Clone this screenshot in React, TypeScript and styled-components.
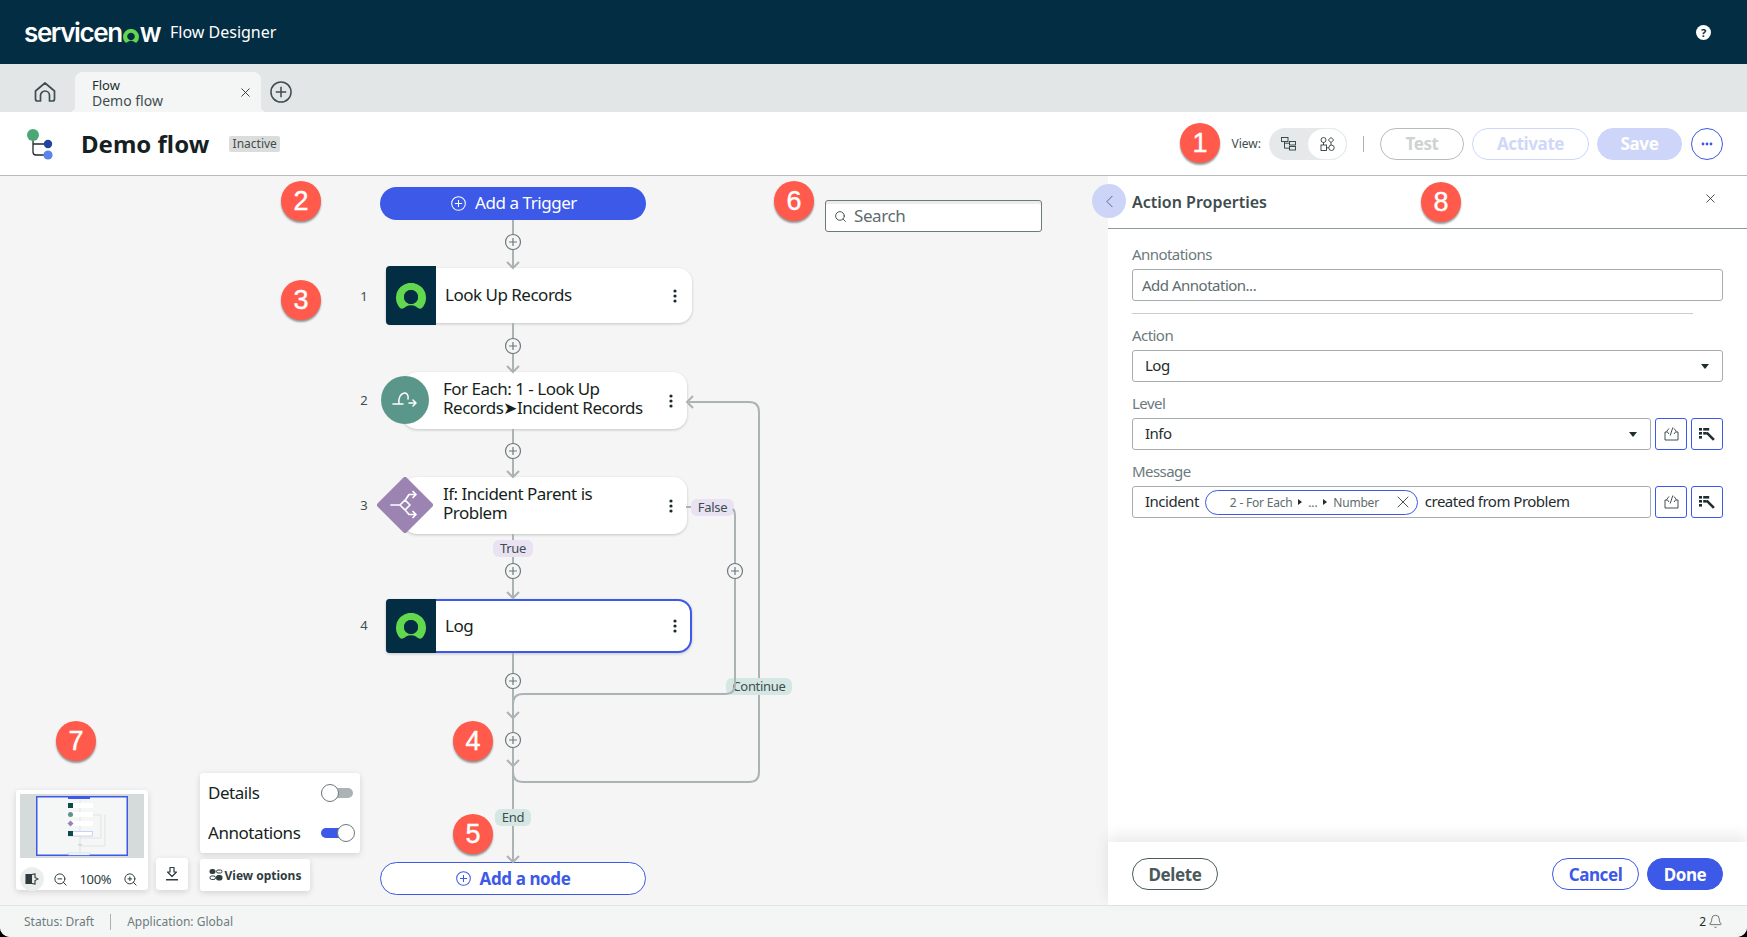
import React from "react";
import styled, { createGlobalStyle } from "styled-components";
import { Bell, ChevronLeft, Search, X, ZoomIn, ZoomOut } from "lucide-react";

const NowMark = ({ size, hole } : { size: number; hole?: string }) => (
    <svg width={size} height={size * 26 / 30} viewBox="0 0 30 26">
        <path
            fill="#62d84e"
            fillRule="evenodd"
            d="M4 25A15 15 0 1 1 26 25C24.5 26.5 22 25.5 20 23.5C17 21.7 13 21.7 10 23.5C8 25.5 5.5 26.5 4 25ZM15 7a7 7 0 1 0 .01 0Z"
        />
        {hole && <circle cx="15" cy="14" r="7" fill={hole} />}
    </svg>
);

const Kebab = () => (
    <svg width="4" height="14" viewBox="0 0 4 14" fill="#1c2a2e">
        <circle cx="2" cy="2" r="1.6" />
        <circle cx="2" cy="7" r="1.6" />
        <circle cx="2" cy="12" r="1.6" />
    </svg>
);

const PlusCircle = ({ size, color } : { size: number; color: string }) => (
    <svg width={size} height={size} viewBox="0 0 16 16" fill="none" stroke={color} strokeWidth="1.1">
        <circle cx="8" cy="8" r="7.3" />
        <path d="M8 4.2V11.8M4.2 8H11.8" />
    </svg>
);

const HomeIcon = () => (
    <svg width="22" height="22" viewBox="0 0 22 22" fill="none" stroke="#3f4d50" strokeWidth="1.7" strokeLinejoin="round">
        <path d="M1.5 10L11 2L20.5 10V18a2 2 0 0 1-2 2H15.5V14.5a4.5 4.5 0 0 0-9 0V20H3.5a2 2 0 0 1-2-2Z" />
    </svg>
);

const FlowIcon = () => (
    <svg width="32" height="34" viewBox="0 0 32 34" fill="none">
        <path d="M9 11V25a3 3 0 0 0 3 3H22M9 17H21" stroke="#1f2a30" strokeWidth="1.3" />
        <circle cx="9" cy="8" r="6" fill="#4aa874" />
        <circle cx="24" cy="17" r="4.2" fill="#23439e" />
        <circle cx="24" cy="28" r="4.6" fill="#5b85ea" />
    </svg>
);

const TreeIcon = () => (
    <svg width="15" height="14" viewBox="0 0 15 14" fill="none" stroke="#2e3c3e" strokeWidth="0.9">
        <rect x="0.5" y="0.5" width="6.5" height="4" />
        <rect x="8.5" y="4.5" width="6" height="3.5" />
        <rect x="8.5" y="9.5" width="6" height="3.5" />
        <path d="M3.5 4.5V11.2H8.5M3.5 6.2H8.5" />
    </svg>
);

const ShapesIcon = () => (
    <svg width="15" height="14" viewBox="0 0 15 14" fill="none" stroke="#2e3c3e" strokeWidth="0.9">
        <circle cx="3.5" cy="3" r="2.5" />
        <path d="M11 .5L13.7 3L11 5.5L8.3 3Z" />
        <rect x="1" y="8" width="5.5" height="5.5" />
        <circle cx="11.5" cy="10.8" r="2.7" />
        <path d="M3.5 5.5V8M11 5.5V8M6.5 10.8H8.8" />
    </svg>
);

const CodeIcon = () => (
    <svg width="15" height="14" viewBox="0 0 15 14" fill="none" stroke="#2e3c3e" strokeWidth="0.9">
        <path d="M3 5H1V13H14V5H12" />
        <path d="M5 1.5L2.8 4.2L5 7M10 1.5L12.2 4.2L10 7M8.8 .5L6.2 8.5" />
    </svg>
);

const PickerIcon = () => (
    <svg width="16" height="14" viewBox="0 0 16 14" fill="#1f2d30">
        <rect x="0" y="1" width="3" height="2.6" />
        <rect x="4.2" y="1" width="6" height="2.6" />
        <rect x="0" y="5" width="3" height="2.6" />
        <rect x="4.2" y="5" width="3.5" height="2.6" />
        <rect x="0" y="9" width="3" height="2.6" />
        <path d="M6.8 6.5L8.6 4.7L15.8 12L14 13.8Z" />
    </svg>
);

const LoopIcon = () => (
    <svg width="48" height="48" viewBox="-24 -24 48 48" fill="none" stroke="#fff" strokeWidth="1.5" strokeLinecap="round" strokeLinejoin="round">
        <path d="M-12 4H-2M-6 4C-8-9 5-10 3-1" />
        <path d="M4 3H11M8 0L11 3L8 6" />
    </svg>
);

const BranchIcon = () => (
    <svg width="56" height="56" viewBox="-28 -28 56 56" fill="none">
        <path d="M0-25.5L25.5 0L0 25.5L-25.5 0Z" fill="#9c84b2" stroke="#9c84b2" strokeWidth="5" strokeLinejoin="round" />
        <g stroke="#fff" strokeWidth="1.7" strokeLinecap="round" strokeLinejoin="round">
            <path d="M-14 0H-5L0-5L5 0L0 5L-5 0" />
            <path d="M1-6L4-10.5H11M8-13.5L11-10.5L8-7.5" />
            <path d="M1 6L4 9.5H11M8 6.5L11 9.5L8 12.5" />
        </g>
    </svg>
);

const MiniMapDrawing = () => (
    <svg width="124" height="64" viewBox="0 0 124 64">
        <rect width="124" height="64" fill="#d5dada" />
        <rect x="16.75" y="2.75" width="90.5" height="58.5" fill="#f5f6f6" stroke="#3c59e7" strokeWidth="1.5" />
        <g fill="none" stroke="#d5dbdb" strokeWidth="0.6">
            <path d="M60 5V59M60 44H81V21H73M60 52H85V21" />
        </g>
        <rect x="48" y="2" width="22" height="3" fill="#3c59e7" />
        <rect x="48" y="9" width="25" height="5" fill="#fff" />
        <rect x="48" y="9" width="5" height="5" fill="#0d4a4a" />
        <rect x="50" y="18" width="23" height="5" fill="#fff" />
        <circle cx="50.5" cy="20.5" r="2.5" fill="#5b968b" />
        <rect x="50" y="27" width="23" height="5" fill="#fff" />
        <path d="M50.5 26.5L53.5 29.5L50.5 32.5L47.5 29.5Z" fill="#9c84b2" />
        <rect x="48.5" y="37.5" width="24" height="4.5" fill="#fff" stroke="#a9b7f2" strokeWidth="0.6" />
        <rect x="48" y="37" width="5" height="5" fill="#0d4a4a" />
        <rect x="48.5" y="59" width="21" height="2" fill="#fff" stroke="#b9c5f5" strokeWidth="0.5" />
        <rect x="58" y="50" width="4" height="1.5" fill="#bfe0d6" />
    </svg>
);

const MapToggleIcon = () => (
    <svg width="14" height="12" viewBox="0 0 14 12" fill="none" stroke="#2e3c3e" strokeWidth="1.1">
        <path d="M1 1.5H6.5V10.5H1Z" fill="#2e3c3e" />
        <path d="M6.5 1.5L10 1V4.5L13 6L10 7.5V11L6.5 10.5" />
    </svg>
);

const ExportIcon = () => (
    <svg width="16" height="16" viewBox="0 0 16 16" fill="none" stroke="#2e3c3e" strokeWidth="1.2" strokeLinejoin="round">
        <path d="M6 1.5H10V6H12.5L8 10.5L3.5 6H6Z" />
        <path d="M2 13.8H14" strokeWidth="1.5" />
    </svg>
);

const OptionsIcon = () => (
    <svg width="14" height="14" viewBox="0 0 14 14" fill="none" stroke="#2e3c3e" strokeWidth="1">
        <rect x="1" y="1.5" width="5" height="4" rx="1.5" fill="#2e3c3e" />
        <rect x="7.5" y="2" width="5.5" height="3" rx="1.5" />
        <rect x="1" y="8" width="5.5" height="3.5" rx="1.7" />
        <rect x="7.5" y="7.5" width="5.5" height="4.5" rx="1.5" fill="#2e3c3e" />
    </svg>
);

const PLUS_LINE = "#6c7a7c";

const Arrow = ({ x, y } : { x: number; y: number }) => (
    <path d={`M${x - 6} ${y - 6}L${x} ${y}L${x + 6} ${y - 6}`} />
);

const AddStep = ({ x, y } : { x: number; y: number }) => (
    <g>
        <circle cx={x} cy={y} r="7.5" fill="#f5f5f5" stroke={PLUS_LINE} strokeWidth="1.2" />
        <path d={`M${x} ${y - 4}V${y + 4}M${x - 4} ${y}H${x + 4}`} stroke={PLUS_LINE} strokeWidth="1.2" />
    </g>
);

const Connectors = () => (
    <Wires viewBox="0 176 1108 729">
        <g fill="none" stroke="#acb3b4" strokeWidth="2">
            <path d="M513 220V267M513 323V371M513 429V476M513 534V540M513 557V597M513 653V717M513 718V765M513 766V809M513 826V861" />
            <path d="M735 516V684Q735 694 725 694H523Q513 694 513 704" />
            <path d="M689 402H749Q759 402 759 412V678M759 695V772Q759 782 749 782H523Q513 782 513 772" />
            <path d="M686 507H691M733 509Q735 511 735 516" />
            <Arrow x={513} y={268} />
            <Arrow x={513} y={372} />
            <Arrow x={513} y={477} />
            <Arrow x={513} y={598} />
            <Arrow x={513} y={718} />
            <Arrow x={513} y={766} />
            <Arrow x={513} y={862} />
            <path d="M693 396L687 402L693 408" />
        </g>
        <AddStep x={513} y={242} />
        <AddStep x={513} y={346} />
        <AddStep x={513} y={451} />
        <AddStep x={513} y={571} />
        <AddStep x={735} y={571} />
        <AddStep x={513} y={681} />
        <AddStep x={513} y={740} />
    </Wires>
);

const App = () => {

    return (
        <Page>
            <GlobalStyle />

            <Header>
                <Logo>
                    servicen<LogoRing><NowMark size={16} /></LogoRing>w
                </Logo>
                <ProductName>Flow Designer</ProductName>
                <HelpDot>?</HelpDot>
            </Header>

            <TabStrip>
                <HomeTab><HomeIcon /></HomeTab>
                <Tab>
                    <TabTitle>
                        <small>Flow</small>
                        <span>Demo flow</span>
                    </TabTitle>
                    <X size={15} strokeWidth={1.4} color="#1f2d30" />
                </Tab>
                <NewTab><PlusCircle size={22} color="#3f4d50" /></NewTab>
            </TabStrip>

            <TitleBar>
                <FlowIcon />
                <FlowName>Demo flow</FlowName>
                <StateTag>Inactive</StateTag>
                <Actions>
                    <ViewLabel>View:</ViewLabel>
                    <ViewSwitch>
                        <ViewOption><TreeIcon /></ViewOption>
                        <ViewOption $active><ShapesIcon /></ViewOption>
                    </ViewSwitch>
                    <Separator />
                    <PillButton $width={84} $kind="mutedGray">Test</PillButton>
                    <PillButton $width={117} $kind="mutedBlue">Activate</PillButton>
                    <PillButton $width={85} $kind="mutedFill">Save</PillButton>
                    <MoreButton>
                        <svg width="12" height="4" viewBox="0 0 12 4" fill="#3c59e7">
                            <circle cx="2" cy="2" r="1.4" />
                            <circle cx="6" cy="2" r="1.4" />
                            <circle cx="10" cy="2" r="1.4" />
                        </svg>
                    </MoreButton>
                </Actions>
            </TitleBar>

            <Main>
                <Canvas>
                    <TriggerButton $x={380} $y={11} $w={266} $h={33}>
                        <PlusCircle size={15} color="#fff" />
                        <ButtonLabel>Add a Trigger</ButtonLabel>
                    </TriggerButton>

                    <StepIndex $x={358} $y={120}>1</StepIndex>
                    <ActionCard $x={386} $y={92} $w={306} $h={55}>
                        <ActionIcon><NowMark size={30} hole="#032d42" /></ActionIcon>
                        <StepText>Look Up Records</StepText>
                        <Kebab />
                    </ActionCard>

                    <StepIndex $x={358} $y={224}>2</StepIndex>
                    <LogicCard $x={400} $y={196} $w={287} $h={57}>
                        <LogicIcon $left={-19} $top={4}><LoopIcon /></LogicIcon>
                        <LogicText>For Each: 1 - Look Up<br />Records➤Incident Records</LogicText>
                        <Kebab />
                    </LogicCard>

                    <StepIndex $x={358} $y={329}>3</StepIndex>
                    <LogicCard $x={400} $y={301} $w={287} $h={57}>
                        <BranchShape $left={-23} $top={0}><BranchIcon /></BranchShape>
                        <LogicText>If: Incident Parent is<br />Problem</LogicText>
                        <Kebab />
                    </LogicCard>

                    <StepIndex $x={358} $y={449}>4</StepIndex>
                    <SelectedCard $x={386} $y={423} $w={306} $h={54}>
                        <ActionIcon><NowMark size={30} hole="#032d42" /></ActionIcon>
                        <StepText>Log</StepText>
                        <Kebab />
                    </SelectedCard>

                    <FlowTag $x={493} $y={364} $w={40} $tone="#e8e2f2">True</FlowTag>
                    <FlowTag $x={691} $y={323} $w={43} $tone="#e8e2f2">False</FlowTag>
                    <FlowTag $x={726} $y={502} $w={66} $tone="#d5e7e3">Continue</FlowTag>
                    <FlowTag $x={495} $y={633} $w={36} $tone="#d5e7e3">End</FlowTag>

                    <NodeButton $x={380} $y={686} $w={266} $h={33}>
                        <PlusCircle size={15} color="#3c59e7" />
                        Add a node
                    </NodeButton>

                    <Connectors />

                    <SearchBox $x={825} $y={24} $w={217} $h={32}>
                        <Search size={13} color="#2e3c3e" strokeWidth={1.6} />
                        <ButtonLabel>Search</ButtonLabel>
                    </SearchBox>

                    <CanvasTools>
                        <MiniMap>
                            <MiniMapDrawing />
                            <MiniMapBar>
                                <ToolRound><MapToggleIcon /></ToolRound>
                                <ZoomOut size={15} color="#2e3c3e" strokeWidth={1.6} />
                                <ZoomLevel>100%</ZoomLevel>
                                <ZoomIn size={15} color="#2e3c3e" strokeWidth={1.6} />
                            </MiniMapBar>
                        </MiniMap>
                        <ExportButton><ExportIcon /></ExportButton>
                        <OptionsColumn>
                            <OptionsCard>
                                <OptionRow>
                                    <ButtonLabel>Details</ButtonLabel>
                                    <Toggle />
                                </OptionRow>
                                <OptionRow>
                                    <ButtonLabel>Annotations</ButtonLabel>
                                    <Toggle $on />
                                </OptionRow>
                            </OptionsCard>
                            <ViewOptions>
                                <OptionsIcon />
                                View options
                            </ViewOptions>
                        </OptionsColumn>
                    </CanvasTools>
                </Canvas>

                <Panel>
                    <BackButton><ChevronLeft size={21} strokeWidth={1} color="#4d5d60" /></BackButton>
                    <PanelHeader>
                        <PanelTitle>Action Properties</PanelTitle>
                        <PanelClose><X size={15} strokeWidth={1.3} color="#1f2d30" /></PanelClose>
                    </PanelHeader>

                    <PanelBody>
                        <Field>
                            <FieldLabel>Annotations</FieldLabel>
                            <TextBox $placeholder>Add Annotation...</TextBox>
                        </Field>
                        <FieldRule />
                        <Field>
                            <FieldLabel>Action</FieldLabel>
                            <TextBox>
                                Log
                                <SelectCaret />
                            </TextBox>
                        </Field>
                        <Field>
                            <FieldLabel>Level</FieldLabel>
                            <FieldRow>
                                <TextBox>
                                    Info
                                    <SelectCaret />
                                </TextBox>
                                <IconButton><CodeIcon /></IconButton>
                                <IconButton><PickerIcon /></IconButton>
                            </FieldRow>
                        </Field>
                        <Field>
                            <FieldLabel>Message</FieldLabel>
                            <FieldRow>
                                <TextBox>
                                    Incident
                                    <DataPill>
                                        <DataPath>
                                            2 - For Each <PathCaret /> ... <PathCaret /> Number
                                        </DataPath>
                                        <X size={20} strokeWidth={1} color="#1f2d30" />
                                    </DataPill>
                                    created from Problem
                                </TextBox>
                                <IconButton><CodeIcon /></IconButton>
                                <IconButton><PickerIcon /></IconButton>
                            </FieldRow>
                        </Field>
                    </PanelBody>

                    <PanelFooter>
                        <PillButton $width={86} $kind="outlineDark">Delete</PillButton>
                        <FooterRight>
                            <PillButton $width={87} $kind="outlineBlue">Cancel</PillButton>
                            <PillButton $width={76} $kind="fillBlue">Done</PillButton>
                        </FooterRight>
                    </PanelFooter>
                </Panel>
            </Main>

            <StatusBar>
                <StatusText>Status: Draft</StatusText>
                <StatusDivider />
                <StatusText>Application: Global</StatusText>
                <Notifications>
                    2
                    <Bell size={15} strokeWidth={1} color="#1f2d30" />
                </Notifications>
            </StatusBar>

            <Marker $x={1200} $y={143}>1</Marker>
            <Marker $x={301} $y={201}>2</Marker>
            <Marker $x={301} $y={300}>3</Marker>
            <Marker $x={473} $y={741}>4</Marker>
            <Marker $x={473} $y={834}>5</Marker>
            <Marker $x={794} $y={201}>6</Marker>
            <Marker $x={76} $y={741}>7</Marker>
            <Marker $x={1441} $y={202}>8</Marker>
        </Page>
    )
}

const GlobalStyle = createGlobalStyle`
    html, body {
        margin: 0;
        padding: 0;
        background: #000;
    }

    * {
        box-sizing: border-box;
    }
`;

const Page = styled.div`
    position: relative;
    display: flex;
    flex-direction: column;
    width: 1747px;
    height: 937px;
    overflow: hidden;
    border-radius: 0 0 10px 10px;
    background: #f5f5f5;
    font-family: "Noto Sans", sans-serif;
    color: #1f2d30;
`;

const Header = styled.header`
    display: flex;
    align-items: center;
    flex: none;
    height: 64px;
    padding: 0 36px 0 24px;
    background: #032d42;
    color: #fff;
`;

const Logo = styled.div`
    display: flex;
    align-items: baseline;
    flex: none;
    width: 135px;
    font-family: "Inter", sans-serif;
    font-size: 26px;
    font-weight: 600;
    letter-spacing: -1.4px;
`;

const LogoRing = styled.span`
    display: inline-flex;
    margin: 0 1px;
    transform: translateY(1px);
`;

const ProductName = styled.div`
    margin-left: 11px;
    font-size: 16px;
`;

const HelpDot = styled.div`
    display: flex;
    align-items: center;
    justify-content: center;
    width: 15px;
    height: 15px;
    margin-left: auto;
    border-radius: 50%;
    background: #fff;
    color: #032d42;
    font-size: 11px;
    font-weight: 700;
`;

const TabStrip = styled.nav`
    display: flex;
    align-items: flex-end;
    flex: none;
    height: 48px;
    padding-left: 34px;
    background: #e3e6e7;
`;

const HomeTab = styled.div`
    align-self: center;
    display: flex;
    width: 41px;
    margin-top: 8px;
`;

const Tab = styled.div`
    position: relative;
    display: flex;
    align-items: center;
    justify-content: space-between;
    width: 186px;
    height: 40px;
    padding: 0 8px 0 17px;
    border-radius: 8px 8px 0 0;
    background: #f4f6f6;

    &::before, &::after {
        content: "";
        position: absolute;
        bottom: 0;
        width: 6px;
        height: 6px;
        background: radial-gradient(circle at var(--side) 0, #e3e6e7 6px, #f4f6f6 6.5px);
    }

    &::before {
        --side: 0;
        left: -6px;
    }

    &::after {
        --side: 100%;
        right: -6px;
    }
`;

const TabTitle = styled.div`
    display: flex;
    flex-direction: column;
    padding-top: 1px;
    line-height: 15px;

    & small {
        font-size: 13px;
        color: #1f2d30;
    }

    & span {
        font-size: 14px;
        color: #3f4d50;
    }
`;

const NewTab = styled.div`
    align-self: center;
    display: flex;
    margin: 8px 0 0 9px;
`;

const TitleBar = styled.div`
    display: flex;
    align-items: center;
    flex: none;
    height: 64px;
    padding: 0 24px 0 24px;
    border-bottom: 1px solid #b5bbbb;
    background: #fff;
`;

const FlowName = styled.h1`
    margin: 0 0 0 25px;
    font-size: 24px;
    font-weight: 700;
    color: #161f22;
`;

const StateTag = styled.span`
    display: flex;
    align-items: center;
    justify-content: center;
    width: 51px;
    height: 16px;
    margin-left: 20px;
    border-radius: 2px;
    background: #dcdcdc;
    font-size: 12px;
    color: #3f4d50;
`;

const Actions = styled.div`
    display: flex;
    align-items: center;
    margin-left: auto;
    gap: 8px;
`;

const ViewLabel = styled.span`
    font-size: 12px;
    color: #3f4d50;
`;

const ViewSwitch = styled.div`
    display: flex;
    width: 78px;
    height: 32px;
    border-radius: 16px;
    background: #e6e9e9;
`;

const ViewOption = styled.div<{ $active?: boolean }>`
    display: flex;
    align-items: center;
    justify-content: center;
    width: ${props => props.$active ? "40px" : "38px"};
    border: ${props => props.$active ? "1px solid #e6e9e9" : "none"};
    border-radius: 16px;
    background: ${props => props.$active ? "#fff" : "none"};
`;

const Separator = styled.div`
    width: 1px;
    height: 16px;
    margin: 0 8px;
    background: #a9b1b2;
`;

const pillKinds = {
    mutedGray:   "border: 1px solid #b7bcbd; color: #cfd2d2; background: #fff;",
    mutedBlue:   "border: 1px solid #cdd6f8; color: #d0d8f8; background: #fff;",
    mutedFill:   "border: 1px solid #cdd6f8; color: #fff; background: #cdd6f8;",
    outlineDark: "border: 1px solid #4d5b5e; color: #4a5a5c; background: #fff;",
    outlineBlue: "border: 1px solid #3c59e7; color: #3c59e7; background: #fff;",
    fillBlue:    "border: 1px solid #3c59e7; color: #fff; background: #3c59e7;",
};

const PillButton = styled.div<{ $width: number; $kind: keyof typeof pillKinds }>`
    display: flex;
    align-items: center;
    justify-content: center;
    width: ${props => props.$width}px;
    height: 32px;
    border-radius: 16px;
    font-size: 17px;
    font-weight: 700;
    letter-spacing: -0.4px;
    ${props => pillKinds[props.$kind]}
`;

const MoreButton = styled.div`
    display: flex;
    align-items: center;
    justify-content: center;
    width: 32px;
    height: 32px;
    margin-left: 1px;
    border: 1px solid #3c59e7;
    border-radius: 50%;
`;

const Main = styled.main`
    display: flex;
    flex: 1;
    min-height: 0;
`;

const Canvas = styled.section`
    position: relative;
    flex: none;
    width: 1108px;
    background: #f5f5f5;
`;

const Wires = styled.svg`
    position: absolute;
    top: 0;
    left: 0;
    width: 1108px;
    height: 729px;
    pointer-events: none;
`;

const DiagramNode = styled.div<{ $x: number; $y: number; $w: number; $h: number }>`
    position: absolute;
    left: ${props => props.$x}px;
    top: ${props => props.$y}px;
    display: flex;
    align-items: center;
    width: ${props => props.$w}px;
    height: ${props => props.$h}px;
`;

const ButtonLabel = styled.span`
    margin-top: -2px;
`;

const TriggerButton = styled(DiagramNode)`
    justify-content: center;
    gap: 9px;
    padding-left: 2px;
    border-radius: 17px;
    background: #3c59e7;
    color: #fff;
    font-size: 17px;
    letter-spacing: -0.45px;
`;

const NodeButton = styled(DiagramNode)`
    justify-content: center;
    gap: 9px;
    border: 1px solid #3c59e7;
    border-radius: 17px;
    background: #fff;
    color: #3c59e7;
    font-size: 17px;
    font-weight: 700;
    letter-spacing: -0.4px;
`;

const StepIndex = styled.div<{ $x: number; $y: number }>`
    position: absolute;
    left: ${props => props.$x}px;
    top: ${props => props.$y - 9}px;
    width: 12px;
    font-size: 13px;
    line-height: 18px;
    text-align: center;
    color: #3f4d50;
`;

const ActionCard = styled(DiagramNode)`
    padding-right: 15px;
    border-radius: 4px 14px 14px 4px;
    background: #fff;
    box-shadow: 0 1px 3px rgba(0, 0, 0, 0.2);
`;

const SelectedCard = styled(ActionCard)`
    padding-right: 13px;
    border: 2px solid #3c59e7;
    border-left: 0;
`;

const ActionIcon = styled.div`
    display: flex;
    align-items: center;
    justify-content: center;
    align-self: stretch;
    flex: none;
    width: 50px;
    margin: -2px 0;
    border-radius: 4px 0 0 4px;
    background: #032d42;
`;

const StepText = styled.div`
    flex: 1;
    margin-top: -2px;
    padding-left: 9px;
    font-size: 17px;
    letter-spacing: -0.5px;
    color: #161f22;
`;

const LogicCard = styled(DiagramNode)`
    padding: 0 14px 0 43px;
    border-radius: 18px 14px 14px 18px;
    background: #fff;
    box-shadow: 0 1px 3px rgba(0, 0, 0, 0.2);
`;

const LogicIcon = styled.div<{ $left: number; $top: number }>`
    position: absolute;
    left: ${props => props.$left}px;
    top: ${props => props.$top}px;
    display: flex;
    border-radius: 50%;
    background: #5b968b;
`;

const BranchShape = styled(LogicIcon)`
    background: none;
`;

const LogicText = styled.div`
    flex: 1;
    margin-top: -6px;
    font-size: 17px;
    letter-spacing: -0.5px;
    line-height: 19px;
    color: #161f22;
`;

const FlowTag = styled.div<{ $x: number; $y: number; $w: number; $tone: string }>`
    position: absolute;
    left: ${props => props.$x}px;
    top: ${props => props.$y}px;
    width: ${props => props.$w}px;
    height: 17px;
    border-radius: 6px;
    background: ${props => props.$tone};
    font-size: 13px;
    letter-spacing: -0.3px;
    line-height: 17px;
    text-align: center;
    color: #3f4d50;
`;

const SearchBox = styled(DiagramNode)`
    gap: 7px;
    padding-left: 8px;
    border: 1px solid #6c7a7c;
    border-radius: 3px;
    background: #fff;
    box-shadow: inset 0 3px 0 #ececec;
    font-size: 17px;
    letter-spacing: -0.4px;
    color: #5e6c6e;
`;

const CanvasTools = styled.div`
    position: absolute;
    left: 16px;
    bottom: 14px;
    display: flex;
    align-items: flex-end;
`;

const floatCard = `
    border-radius: 3px;
    background: #fff;
    box-shadow: 0 2px 6px rgba(0, 0, 0, 0.14);
`;

const MiniMap = styled.div`
    width: 132px;
    height: 100px;
    margin-bottom: 1px;
    padding: 4px 4px 0;
    ${floatCard}
`;

const MiniMapBar = styled.div`
    display: flex;
    align-items: center;
    justify-content: space-between;
    height: 32px;
    padding: 0 6px 0 0;
`;

const ToolRound = styled.div`
    display: flex;
    align-items: center;
    justify-content: center;
    width: 24px;
    height: 24px;
    margin-right: -3px;
    border-radius: 50%;
    background: #eceeee;
`;

const ZoomLevel = styled.span`
    font-size: 13px;
    letter-spacing: -0.3px;
    color: #2e3c3e;
`;

const ExportButton = styled.div`
    display: flex;
    align-items: center;
    justify-content: center;
    width: 32px;
    height: 32px;
    margin: 0 12px 1px 8px;
    ${floatCard}
`;

const OptionsColumn = styled.div`
    display: flex;
    flex-direction: column;
    gap: 6px;
    width: 160px;
`;

const OptionsCard = styled.div`
    display: flex;
    flex-direction: column;
    justify-content: space-around;
    height: 80px;
    padding: 0 7px 0 8px;
    ${floatCard}
`;

const OptionRow = styled.div`
    display: flex;
    align-items: center;
    justify-content: space-between;
    font-size: 17px;
    letter-spacing: -0.45px;
    color: #161f22;
`;

const Toggle = styled.div<{ $on?: boolean }>`
    position: relative;
    width: 32px;
    height: 10px;
    border-radius: 5px;
    background: ${props => props.$on ? "#3c59e7" : "#acb3b4"};

    &::after {
        content: "";
        position: absolute;
        top: -4px;
        left: ${props => props.$on ? "16px" : "0"};
        width: 16px;
        height: 16px;
        border: 1px solid #6c7a7c;
        border-radius: 50%;
        background: #fff;
    }
`;

const ViewOptions = styled.div`
    display: flex;
    align-items: center;
    justify-content: center;
    gap: 2px;
    width: 110px;
    height: 32px;
    font-size: 12px;
    font-weight: 700;
    color: #2e3c3e;
    ${floatCard}
`;

const Panel = styled.aside`
    position: relative;
    display: flex;
    flex-direction: column;
    flex: 1;
    background: #fff;
`;

const BackButton = styled.div`
    position: absolute;
    left: -16px;
    top: 8px;
    display: flex;
    align-items: center;
    justify-content: center;
    width: 34px;
    height: 34px;
    border-radius: 50%;
    background: #ccd5f7;
`;

const PanelHeader = styled.div`
    display: flex;
    align-items: center;
    justify-content: space-between;
    flex: none;
    height: 53px;
    padding: 0 29px 0 24px;
    border-bottom: 1px solid #8e9a9c;
`;

const PanelTitle = styled.h2`
    margin: 0;
    font-size: 16px;
    font-weight: 600;
    color: #3e4c4e;
`;

const PanelClose = styled.div`
    display: flex;
    margin-top: -8px;
`;

const PanelBody = styled.div`
    flex: 1;
    padding: 16px 24px 0;
`;

const Field = styled.div`
    display: flex;
    flex-direction: column;
    gap: 4px;
    margin-bottom: 12px;
`;

const FieldLabel = styled.label`
    margin: -1px 0 1px;
    font-size: 15px;
    letter-spacing: -0.55px;
    line-height: 20px;
    color: #6b7a7d;
`;

const FieldRule = styled.div`
    height: 1px;
    margin: 0 30px 12px 0;
    background: #c8cdce;
`;

const FieldRow = styled.div`
    display: flex;
    gap: 4px;
`;

const TextBox = styled.div<{ $placeholder?: boolean }>`
    display: flex;
    align-items: center;
    flex: 1 1 auto;
    min-width: 0;
    min-height: 32px;
    padding: 0 13px ${props => props.$placeholder ? "0" : "2px"} ${props => props.$placeholder ? "9px" : "12px"};
    border: 1px solid #a6adae;
    border-radius: 3px;
    background: #fff;
    font-size: 15px;
    letter-spacing: -0.5px;
    color: ${props => props.$placeholder ? "#5e6c6e" : "#1f2d30"};
`;

const SelectCaret = styled.span`
    width: 0;
    height: 0;
    margin: 2px 0 0 auto;
    border-top: 5px solid #1f2d30;
    border-left: 4.5px solid transparent;
    border-right: 4.5px solid transparent;
`;

const IconButton = styled.div`
    display: flex;
    align-items: center;
    justify-content: center;
    flex: none;
    width: 32px;
    height: 32px;
    border: 1px solid #3c59e7;
    border-radius: 3px;
`;

const DataPill = styled.div`
    display: flex;
    align-items: center;
    justify-content: space-between;
    flex: none;
    width: 213px;
    height: 25px;
    margin: 2px 7px 0 6px;
    padding: 0 4px 0 24px;
    border: 1px solid #3c59e7;
    border-radius: 13px;
`;

const DataPath = styled.span`
    display: flex;
    align-items: center;
    gap: 3px;
    font-size: 12px;
    letter-spacing: -0.2px;
    color: #5e6c6e;
    white-space: pre;
`;

const PathCaret = styled.span`
    width: 0;
    height: 0;
    border-left: 4px solid #1f2d30;
    border-top: 3.5px solid transparent;
    border-bottom: 3.5px solid transparent;
`;

const PanelFooter = styled.div`
    display: flex;
    align-items: center;
    justify-content: space-between;
    flex: none;
    height: 63px;
    padding: 1px 24px 0;
    background: #fff;
    box-shadow: 0 -6px 14px rgba(0, 0, 0, 0.09);
`;

const FooterRight = styled.div`
    display: flex;
    gap: 8px;
`;

const StatusBar = styled.footer`
    display: flex;
    align-items: center;
    flex: none;
    height: 32px;
    padding: 0 24px;
    border-top: 1px solid #e2e4e4;
    background: #f4f6f6;
`;

const StatusText = styled.span`
    font-size: 12px;
    color: #6d7b7e;
`;

const StatusDivider = styled.div`
    width: 1px;
    height: 16px;
    margin: 0 16px;
    background: #a9b1b2;
`;

const Notifications = styled.div`
    display: flex;
    align-items: center;
    gap: 2px;
    margin-left: auto;
    font-size: 12px;
    color: #1f2d30;
`;

const Marker = styled.div<{ $x: number; $y: number }>`
    position: absolute;
    left: ${props => props.$x - 20}px;
    top: ${props => props.$y - 20}px;
    display: flex;
    align-items: center;
    justify-content: center;
    width: 40px;
    height: 40px;
    border-radius: 50%;
    background: #ff5a4c;
    box-shadow: 0 2px 2px rgba(0, 0, 0, 0.4);
    font-family: "Liberation Sans", sans-serif;
    font-size: 27px;
    color: #fff;
    -webkit-text-stroke: 0.4px #fff;
`;

export default App;
